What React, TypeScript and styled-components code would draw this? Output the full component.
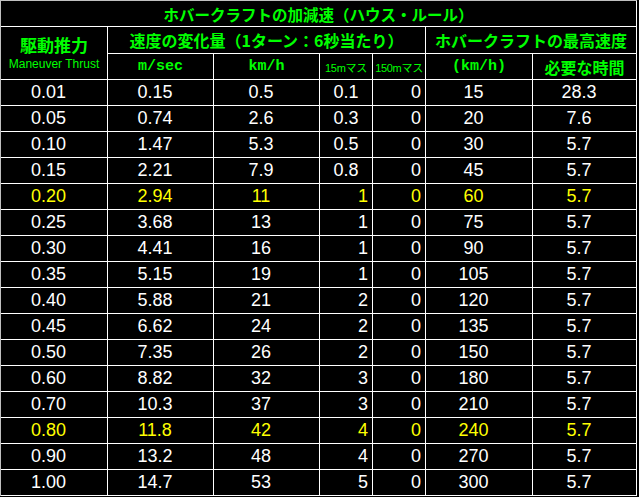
import React from 'react';
import styled, { createGlobalStyle } from 'styled-components';

const GlobalStyle = createGlobalStyle`
  html, body {
    margin: 0;
    padding: 0;
    background: #000;
  }
`;

const Table = styled.table`
  border-collapse: separate;
  border-spacing: 0;
  table-layout: fixed;
  width: 637px;
  background: #000;
  border-top: 1px solid #c0c0c0;
  border-left: 1px solid #c0c0c0;
`;

const Col = styled.col<{ $w: number }>`
  width: ${p => p.$w}px;
`;

const Cell = styled.td<{ $h?: number }>`
  height: ${p => p.$h ?? 25}px;
  padding: 0;
  border-right: 1px solid #fff;
  border-bottom: 1px solid #fff;
  box-sizing: content-box;
  white-space: nowrap;
  overflow: hidden;
`;

const HeadCell = styled(Cell)`
  color: #00ff00;
  text-align: center;
  font-family: 'Noto Sans CJK JP', sans-serif;
  font-weight: bold;
  font-size: 16px;
`;

const Title = styled(HeadCell)`
  font-size: 15.5px;
`;

const MonoHead = styled(HeadCell)`
  font-family: 'Liberation Mono', 'Noto Sans CJK JP', monospace;
  font-size: 15px;
`;

const SmallHead = styled(HeadCell)`
  font-family: 'Liberation Sans', 'Noto Sans CJK JP', sans-serif;
  font-weight: normal;
  font-size: 11px;
  letter-spacing: -0.3px;
`;

const ThrustJa = styled.div`
  font-size: 17px;
  line-height: 20px;
`;

const ThrustEn = styled.div`
  font-family: 'Liberation Sans', sans-serif;
  font-weight: normal;
  font-size: 12px;
  line-height: 14px;
  margin-top: 2px;
`;

const DataCell = styled(Cell)<{ $hi: boolean; $align: 'center' | 'right' | 'mid' }>`
  color: ${p => (p.$hi ? '#ffff00' : '#fff')};
  font-family: 'Liberation Sans', Arial, sans-serif;
  font-size: 18px;
  text-align: ${p => (p.$align === 'right' ? 'right' : 'center')};
  padding-right: ${p => (p.$align === 'right' ? 4 : p.$align === 'center' ? 11 : 0)}px;
`;

type Row = [string, string, string, string, string, string, string];

const rows: Row[] = [
  ['0.01', '0.15', '0.5', '0.1', '0', '15', '28.3'],
  ['0.05', '0.74', '2.6', '0.3', '0', '20', '7.6'],
  ['0.10', '1.47', '5.3', '0.5', '0', '30', '5.7'],
  ['0.15', '2.21', '7.9', '0.8', '0', '45', '5.7'],
  ['0.20', '2.94', '11', '1', '0', '60', '5.7'],
  ['0.25', '3.68', '13', '1', '0', '75', '5.7'],
  ['0.30', '4.41', '16', '1', '0', '90', '5.7'],
  ['0.35', '5.15', '19', '1', '0', '105', '5.7'],
  ['0.40', '5.88', '21', '2', '0', '120', '5.7'],
  ['0.45', '6.62', '24', '2', '0', '135', '5.7'],
  ['0.50', '7.35', '26', '2', '0', '150', '5.7'],
  ['0.60', '8.82', '32', '3', '0', '180', '5.7'],
  ['0.70', '10.3', '37', '3', '0', '210', '5.7'],
  ['0.80', '11.8', '42', '4', '0', '240', '5.7'],
  ['0.90', '13.2', '48', '4', '0', '270', '5.7'],
  ['1.00', '14.7', '53', '5', '0', '300', '5.7'],
];

// 黄色で強調する行
const highlight = ['0.20', '0.80'];

const widths = [107, 106, 106, 53, 53, 107, 104];

export default function App() {
  return (
    <>
      <GlobalStyle />
      <Table>
        <colgroup>
          {widths.map((w, i) => (
            <Col key={i} $w={w} />
          ))}
        </colgroup>
        <thead>
          <tr>
            <Title colSpan={7}>ホバークラフトの加減速（ハウス・ルール）</Title>
          </tr>
          <tr>
            <HeadCell rowSpan={2}>
              <ThrustJa>駆動推力</ThrustJa>
              <ThrustEn>Maneuver Thrust</ThrustEn>
            </HeadCell>
            <HeadCell colSpan={4} $h={26}>
              速度の変化量（1ターン：6秒当たり）
            </HeadCell>
            <HeadCell colSpan={2} $h={26}>
              ホバークラフトの最高速度
            </HeadCell>
          </tr>
          <tr>
            <MonoHead>m/sec</MonoHead>
            <MonoHead>km/h</MonoHead>
            <SmallHead>15mマス</SmallHead>
            <SmallHead>150mマス</SmallHead>
            <MonoHead>(km/h)</MonoHead>
            <HeadCell>必要な時間</HeadCell>
          </tr>
        </thead>
        <tbody>
          {rows.map(r => {
            const hi = highlight.includes(r[0]);
            return (
              <tr key={r[0]}>
                <DataCell $hi={hi} $align="center">{r[0]}</DataCell>
                <DataCell $hi={hi} $align="center">{r[1]}</DataCell>
                <DataCell $hi={hi} $align="center">{r[2]}</DataCell>
                <DataCell $hi={hi} $align={r[3].includes('.') ? 'mid' : 'right'}>{r[3]}</DataCell>
                <DataCell $hi={hi} $align="right">{r[4]}</DataCell>
                <DataCell $hi={hi} $align="center">{r[5]}</DataCell>
                <DataCell $hi={hi} $align="center">{r[6]}</DataCell>
              </tr>
            );
          })}
        </tbody>
      </Table>
    </>
  );
}
